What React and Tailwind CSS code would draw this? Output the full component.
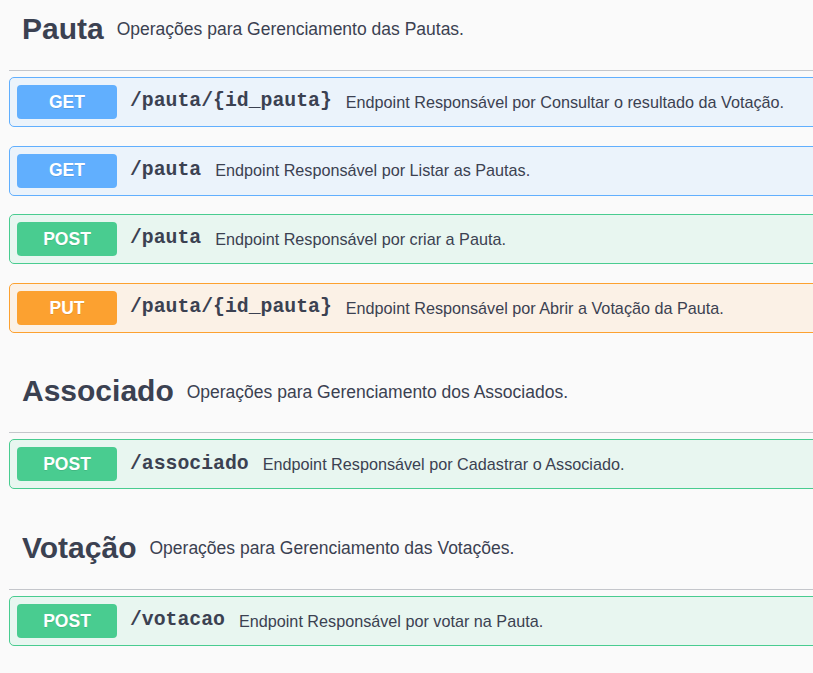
const methodStyles = {
  GET: { block: 'bg-[#ebf3fb] border-[#61affe]', badge: 'bg-[#61affe]' },
  POST: { block: 'bg-[#e8f6f0] border-[#49cc90]', badge: 'bg-[#49cc90]' },
  PUT: { block: 'bg-[#fbf1e6] border-[#fca130]', badge: 'bg-[#fca130]' },
};

const sections = [
  {
    name: 'Pauta',
    description: 'Operações para Gerenciamento das Pautas.',
    ops: [
      { method: 'GET', path: '/pauta/{id_pauta}', summary: 'Endpoint Responsável por Consultar o resultado da Votação.' },
      { method: 'GET', path: '/pauta', summary: 'Endpoint Responsável por Listar as Pautas.' },
      { method: 'POST', path: '/pauta', summary: 'Endpoint Responsável por criar a Pauta.' },
      { method: 'PUT', path: '/pauta/{id_pauta}', summary: 'Endpoint Responsável por Abrir a Votação da Pauta.' },
    ],
  },
  {
    name: 'Associado',
    description: 'Operações para Gerenciamento dos Associados.',
    ops: [
      { method: 'POST', path: '/associado', summary: 'Endpoint Responsável por Cadastrar o Associado.' },
    ],
  },
  {
    name: 'Votação',
    description: 'Operações para Gerenciamento das Votações.',
    ops: [
      { method: 'POST', path: '/votacao', summary: 'Endpoint Responsável por votar na Pauta.' },
    ],
  },
];

function Operation({ method, path, summary }) {
  const s = methodStyles[method];
  return (
    <div className={`flex items-center h-[50px] mb-[18.6px] border rounded-[5px] px-[7px] ${s.block}`}>
      <span
        className={`w-[100px] h-[34px] shrink-0 flex items-center justify-center rounded-[4px] text-white font-bold text-[17.5px] [text-shadow:0_1px_0_rgba(0,0,0,0.1)] ${s.badge}`}
      >
        {method}
      </span>
      <span className="ml-[13px] pr-[14px] font-['Liberation_Mono',monospace] font-bold text-[19.8px] text-[#3b4151]">
        {path}
      </span>
      <span className="text-[16.2px] text-[#3b4151]">{summary}</span>
    </div>
  );
}

export default function App() {
  return (
    <div className="w-[813px] h-[673px] overflow-hidden bg-[#fafafa] font-['Liberation_Sans',Arial,sans-serif] text-[#3b4151]">
      <div className="w-[840px] pl-[9px]">
        {sections.map((sec, i) => (
          <section key={sec.name} className={i > 0 ? 'mt-[29.6px]' : ''}>
            <div className="flex items-center h-[71px] pl-[13px] pb-[12px] border-b border-[#c4c6cb] mb-[6px]">
              <h3 className="text-[30px] font-bold leading-[36px]">{sec.name}</h3>
              <span className="ml-[13px] text-[17.5px] mt-[1px]">{sec.description}</span>
            </div>
            {sec.ops.map((op, j) => (
              <Operation key={j} {...op} />
            ))}
          </section>
        ))}
      </div>
    </div>
  );
}
